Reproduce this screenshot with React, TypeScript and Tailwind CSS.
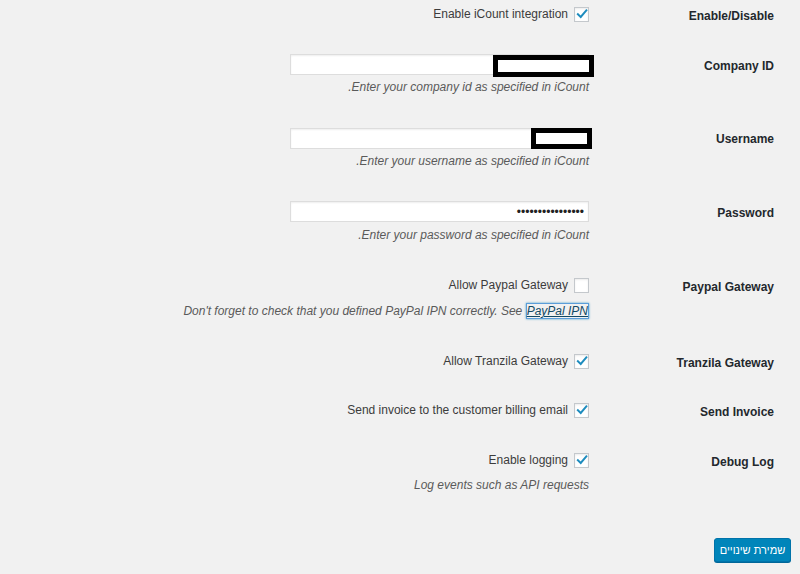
import React from "react";

const font = { fontFamily: '"Liberation Sans", "DejaVu Sans", Arial, sans-serif' };

function Check({ checked }: { checked: boolean }) {
  return (
    <span className="w-[15px] h-[15px] shrink-0 border border-[#c4c8cc] bg-white shadow-[inset_0_1px_2px_rgba(0,0,0,0.08)] flex items-center justify-center">
      {checked && (
        <svg width="12" height="12" viewBox="0 0 16 16">
          <path d="M2.5 8.2 L6.3 12 L13.8 3.2" fill="none" stroke="#1e8cbe" strokeWidth="2.6" strokeLinecap="square" />
        </svg>
      )}
    </span>
  );
}

function Row({
  label,
  pt,
  h,
  children,
}: {
  label: string;
  pt: string;
  h: string;
  children: React.ReactNode;
}) {
  return (
    <div className={`flex ${h}`}>
      <div className={`w-[185px] shrink-0 ${pt} text-[12px] leading-[16px] font-bold text-[#23282d]`}>{label}</div>
      <div className="w-[299px] flex flex-col items-start">{children}</div>
    </div>
  );
}

function CheckLine({ text, checked }: { text: string; checked: boolean }) {
  return (
    <div className="flex items-center gap-[6px] h-[16px] text-[12px] leading-[16px] text-[#3c3c3c]">
      <Check checked={checked} />
      <span>{text}</span>
    </div>
  );
}

function Desc({ children, mt }: { children: React.ReactNode; mt: string }) {
  return <p className={`${mt} text-[12px] leading-[16px] italic text-[#5a5a5a] whitespace-nowrap`}>{children}</p>;
}

function TextInput({ redact, dots }: { redact?: string; dots?: boolean }) {
  return (
    <div className="relative w-[299px] h-[21px] bg-white border border-[#dddddd] shadow-[inset_0_1px_2px_rgba(0,0,0,0.07)] flex items-center px-[4px]">
      {dots && <span className="text-[12px] leading-[12px] text-[#222]">••••••••••••••••</span>}
      {redact === "company" && (
        <div className="absolute top-[0px] right-[-6px] w-[101px] h-[22px] border-[5px] border-black bg-white" />
      )}
      {redact === "user" && (
        <div className="absolute top-[-1px] right-[-4px] w-[61px] h-[21px] border-[5px] border-black bg-white" />
      )}
    </div>
  );
}

export default function App() {
  return (
    <div dir="rtl" style={font} className="w-[800px] min-h-[574px] bg-[#f1f1f1] pr-[26px] pt-[6px]">
      <Row label="Enable/Disable" pt="pt-[2px]" h="h-[48px]">
        <CheckLine text="Enable iCount integration" checked />
      </Row>
      <Row label="Company ID" pt="pt-[4px]" h="h-[74px]">
        <TextInput redact="company" />
        <Desc mt="mt-[4px]">Enter your company id as specified in iCount.</Desc>
      </Row>
      <Row label="Username" pt="pt-[3px]" h="h-[73px]">
        <TextInput redact="user" />
        <Desc mt="mt-[4px]">Enter your username as specified in iCount.</Desc>
      </Row>
      <Row label="Password" pt="pt-[4px]" h="h-[76px]">
        <TextInput dots />
        <Desc mt="mt-[5px]">Enter your password as specified in iCount.</Desc>
      </Row>
      <Row label="Paypal Gateway" pt="pt-[2px]" h="h-[76px]">
        <CheckLine text="Allow Paypal Gateway" checked={false} />
        <Desc mt="mt-[10px]">
          Don't forget to check that you defined PayPal IPN correctly. See{" "}
          <a className="text-[#124964] underline border border-[#5b9dd9] shadow-[0_0_2px_rgba(30,140,190,0.8)]">
            PayPal IPN
          </a>
        </Desc>
      </Row>
      <Row label="Tranzila Gateway" pt="pt-[2px]" h="h-[49px]">
        <CheckLine text="Allow Tranzila Gateway" checked />
      </Row>
      <Row label="Send Invoice" pt="pt-[2px]" h="h-[50px]">
        <CheckLine text="Send invoice to the customer billing email" checked />
      </Row>
      <Row label="Debug Log" pt="pt-[2px]" h="h-[86px]">
        <CheckLine text="Enable logging" checked />
        <Desc mt="mt-[9px]">Log events such as API requests</Desc>
      </Row>
      <div className="flex mr-[-17px]">
        <button className="h-[24px] w-[77px] rounded-[3px] bg-[#0085ba] border border-[#0073aa] shadow-[0_1px_0_#006799] text-white text-[11px] leading-[22px] whitespace-nowrap">
          שמירת שינויים
        </button>
      </div>
    </div>
  );
}
